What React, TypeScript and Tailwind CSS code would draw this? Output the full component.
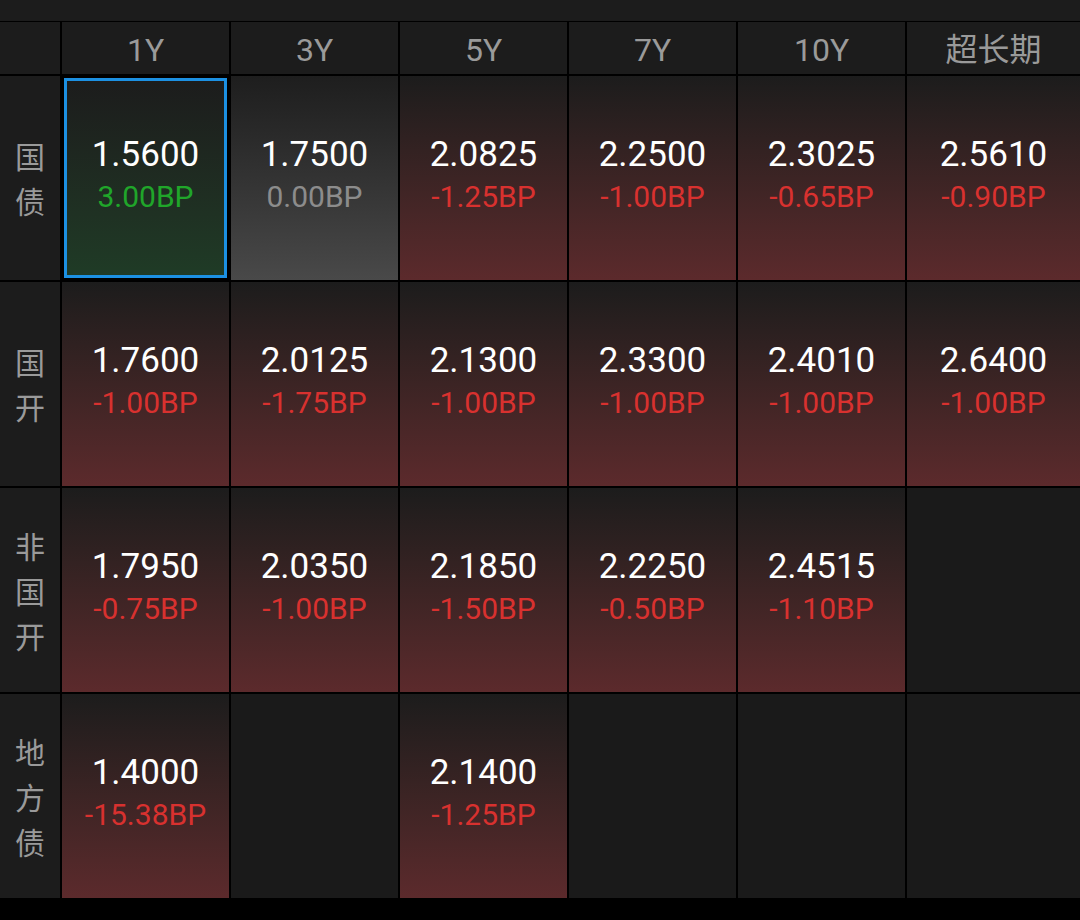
const tenors = ["1Y", "3Y", "5Y", "7Y", "10Y", "超长期"];

type Quote = { rate: string; bp: string } | null;

const rows: { label: string[]; quotes: Quote[] }[] = [
  {
    label: ["国", "债"],
    quotes: [
      { rate: "1.5600", bp: "3.00BP" },
      { rate: "1.7500", bp: "0.00BP" },
      { rate: "2.0825", bp: "-1.25BP" },
      { rate: "2.2500", bp: "-1.00BP" },
      { rate: "2.3025", bp: "-0.65BP" },
      { rate: "2.5610", bp: "-0.90BP" },
    ],
  },
  {
    label: ["国", "开"],
    quotes: [
      { rate: "1.7600", bp: "-1.00BP" },
      { rate: "2.0125", bp: "-1.75BP" },
      { rate: "2.1300", bp: "-1.00BP" },
      { rate: "2.3300", bp: "-1.00BP" },
      { rate: "2.4010", bp: "-1.00BP" },
      { rate: "2.6400", bp: "-1.00BP" },
    ],
  },
  {
    label: ["非", "国", "开"],
    quotes: [
      { rate: "1.7950", bp: "-0.75BP" },
      { rate: "2.0350", bp: "-1.00BP" },
      { rate: "2.1850", bp: "-1.50BP" },
      { rate: "2.2250", bp: "-0.50BP" },
      { rate: "2.4515", bp: "-1.10BP" },
      null,
    ],
  },
  {
    label: ["地", "方", "债"],
    quotes: [
      { rate: "1.4000", bp: "-15.38BP" },
      null,
      { rate: "2.1400", bp: "-1.25BP" },
      null,
      null,
      null,
    ],
  },
];

const cjk = "font-['Noto_Sans_CJK_SC',sans-serif]";

function QuoteCell({ q, selected }: { q: Quote; selected?: boolean }) {
  if (!q) return <div className="bg-[#1a1a1a]" />;
  const flat = q.bp === "0.00BP";
  const up = !q.bp.startsWith("-") && !flat;
  const bg = up
    ? "bg-gradient-to-b from-[#1c1c1c] to-[#1f3b26]"
    : flat
      ? "bg-gradient-to-b from-[#1e1e1e] to-[#494949]"
      : "bg-gradient-to-b from-[#1c1c1c] to-[#5c2a2c]";
  const bpColor = up ? "text-[#20a62a]" : flat ? "text-[#8c8c8c]" : "text-[#d8312f]";
  return (
    <div className={`${selected ? "m-[2px] border-[3px] border-[#1c90e2]" : ""} ${bg} flex flex-col items-center justify-center pb-[4px] font-['Roboto',sans-serif]`}>
      <span className="text-[35px] leading-[42px] text-white">{q.rate}</span>
      <span className={`text-[30px] leading-[42px] ${bpColor}`}>{q.bp}</span>
    </div>
  );
}

export default function App() {
  return (
    <div className="h-[920px] w-[1080px] overflow-hidden bg-black">
      <div className="h-[21px] bg-[#1c1c1c]" />
      <div className="mt-[1px] grid grid-cols-[60px_167px_167px_167px_167px_167px_1fr] grid-rows-[52px_204px_204px_204px_204px] gap-[2px]">
        <div className="bg-[#1c1c1c]" />
        {tenors.map((t) => (
          <div
            key={t}
            className="flex items-center justify-center bg-[#1c1c1c] pt-[3px] text-[32px] text-[#9a9a9a] font-['Roboto','Noto_Sans_CJK_SC',sans-serif]"
          >
            {t}
          </div>
        ))}
        {rows.map((r, ri) => (
          <>
            <div key={`l${ri}`} className={`flex flex-col items-center justify-center bg-[#1c1c1c] text-[30px] leading-[45px] text-[#9a9a9a] ${cjk}`}>
              {r.label.map((c, i) => (
                <span key={i}>{c}</span>
              ))}
            </div>
            {r.quotes.map((q, qi) => (
              <QuoteCell key={`${ri}-${qi}`} q={q} selected={ri === 0 && qi === 0} />
            ))}
          </>
        ))}
      </div>
    </div>
  );
}
